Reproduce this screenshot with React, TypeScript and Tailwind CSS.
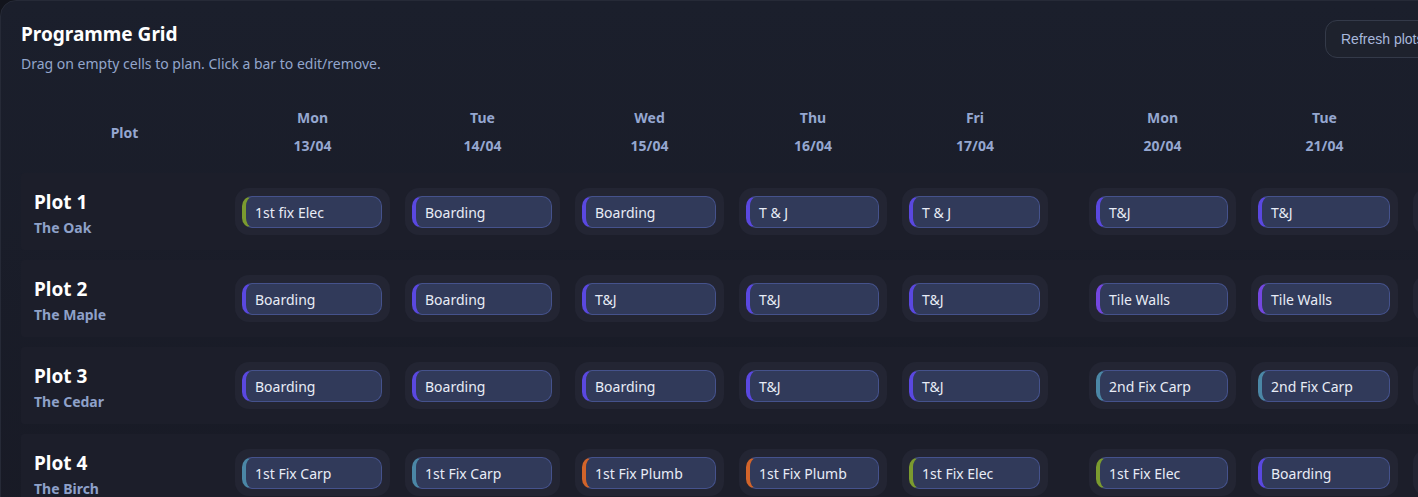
import React from "react";

type Bar = { label: string; tone: string };

const tones: Record<string, string> = {
  indigo: "border-l-[#5a48e0]",
  green: "border-l-[#7b9b2f]",
  teal: "border-l-[#4b87a6]",
  orange: "border-l-[#d2642a]",
  purple: "border-l-[#7447e0]",
};

const days = [
  { day: "Mon", date: "13/04", w: "w-[155px]" },
  { day: "Tue", date: "14/04", w: "w-[155px]" },
  { day: "Wed", date: "15/04", w: "w-[149px]" },
  { day: "Thu", date: "16/04", w: "w-[148px]" },
  { day: "Fri", date: "17/04", w: "w-[146px]" },
  { day: "Mon", date: "20/04", w: "w-[147px]" },
  { day: "Tue", date: "21/04", w: "w-[147px]" },
];

const plots: { name: string; house: string; bars: Bar[] }[] = [
  {
    name: "Plot 1",
    house: "The Oak",
    bars: [
      { label: "1st fix Elec", tone: "green" },
      { label: "Boarding", tone: "indigo" },
      { label: "Boarding", tone: "indigo" },
      { label: "T & J", tone: "indigo" },
      { label: "T & J", tone: "indigo" },
      { label: "T&J", tone: "indigo" },
      { label: "T&J", tone: "indigo" },
    ],
  },
  {
    name: "Plot 2",
    house: "The Maple",
    bars: [
      { label: "Boarding", tone: "indigo" },
      { label: "Boarding", tone: "indigo" },
      { label: "T&J", tone: "indigo" },
      { label: "T&J", tone: "indigo" },
      { label: "T&J", tone: "indigo" },
      { label: "Tile Walls", tone: "purple" },
      { label: "Tile Walls", tone: "purple" },
    ],
  },
  {
    name: "Plot 3",
    house: "The Cedar",
    bars: [
      { label: "Boarding", tone: "indigo" },
      { label: "Boarding", tone: "indigo" },
      { label: "Boarding", tone: "indigo" },
      { label: "T&J", tone: "indigo" },
      { label: "T&J", tone: "indigo" },
      { label: "2nd Fix Carp", tone: "teal" },
      { label: "2nd Fix Carp", tone: "teal" },
    ],
  },
  {
    name: "Plot 4",
    house: "The Birch",
    bars: [
      { label: "1st Fix Carp", tone: "teal" },
      { label: "1st Fix Carp", tone: "teal" },
      { label: "1st Fix Plumb", tone: "orange" },
      { label: "1st Fix Plumb", tone: "orange" },
      { label: "1st Fix Elec", tone: "green" },
      { label: "1st Fix Elec", tone: "green" },
      { label: "Boarding", tone: "indigo" },
    ],
  },
];

// weekend break sits after friday (index 4)
const gapAfter = (i: number) => (i === 4 ? "mr-[41px]" : "mr-[15px]");

const App = () => {
  return (
    <div
      className="w-[1418px] h-[497px] overflow-hidden bg-[#12141c]"
      style={{ fontFamily: '"Noto Sans", "Open Sans", sans-serif' }}
    >
      <div className="w-[1700px] min-h-[560px] rounded-tl-[16px] border border-[#262a37] bg-gradient-to-b from-[#1b1f2c] to-[#181a25] pl-[20px] pt-[19px]">
        {/* heading */}
        <div className="flex">
          <div className="w-[1304px] shrink-0">
            <h2 className="text-[19px] leading-[28px] font-bold text-white">Programme Grid</h2>
            <p className="mt-[6px] text-[14px] leading-5 text-[#93a6cc]">
              Drag on empty cells to plan. Click a bar to edit/remove.
            </p>
          </div>
          <button
            className="h-[38px] rounded-[12px] border border-[#343a49] bg-[#1e222d] px-[15px] text-[14px] text-[#a8b8dc] whitespace-nowrap"
            style={{ fontFamily: '"Liberation Sans", Arial, sans-serif' }}
          >
            Refresh plots
          </button>
        </div>

        {/* column header */}
        <div className="mt-[34px] flex items-center text-[14px] font-bold text-[#95a7d0]">
          <div className="w-[207px] text-center">Plot</div>
          <div className="ml-[7px] flex">
            {days.map((d, i) => (
              <div key={i} className={`${d.w} ${gapAfter(i)} flex flex-col items-center gap-[8px] leading-5`}>
                <span>{d.day}</span>
                <span>{d.date}</span>
              </div>
            ))}
          </div>
        </div>

        {/* plot rows */}
        <div className="mt-[17px] flex flex-col gap-[10px]">
          {plots.map((p) => (
            <div key={p.name} className="flex h-[77px] items-center bg-[#1c1e2a] rounded-[3px]">
              <div className="w-[207px] pl-[13px] pt-[5px]">
                <div className="text-[19px] leading-[24px] font-bold text-white">{p.name}</div>
                <div className="mt-[4px] text-[14px] leading-5 font-bold text-[#8ea1c9]">{p.house}</div>
              </div>
              <div className="ml-[7px] flex">
                {p.bars.map((b, i) => (
                  <div
                    key={i}
                    className={`${days[i].w} ${gapAfter(i)} rounded-[14px] bg-[#232533] pl-[7px] pr-[8px] pt-[8px] pb-[7px]`}
                  >
                    <div
                      className={`flex h-[32px] items-center rounded-[10px] border border-[#45528c] border-l-[4px] ${tones[b.tone]} bg-[#313a5a] pl-[9px] text-[14px] text-[#e8ecf6] whitespace-nowrap`}
                    >
                      {b.label}
                    </div>
                  </div>
                ))}
                {/* next column, cut by the viewport */}
                <div className="w-[147px] rounded-[14px] bg-[#232533] pl-[7px] pr-[8px] pt-[8px] pb-[7px]">
                  <div className="h-[32px] rounded-[10px] border border-[#45528c] bg-[#313a5a]" />
                </div>
              </div>
            </div>
          ))}
        </div>
      </div>
    </div>
  );
};

export default App;
